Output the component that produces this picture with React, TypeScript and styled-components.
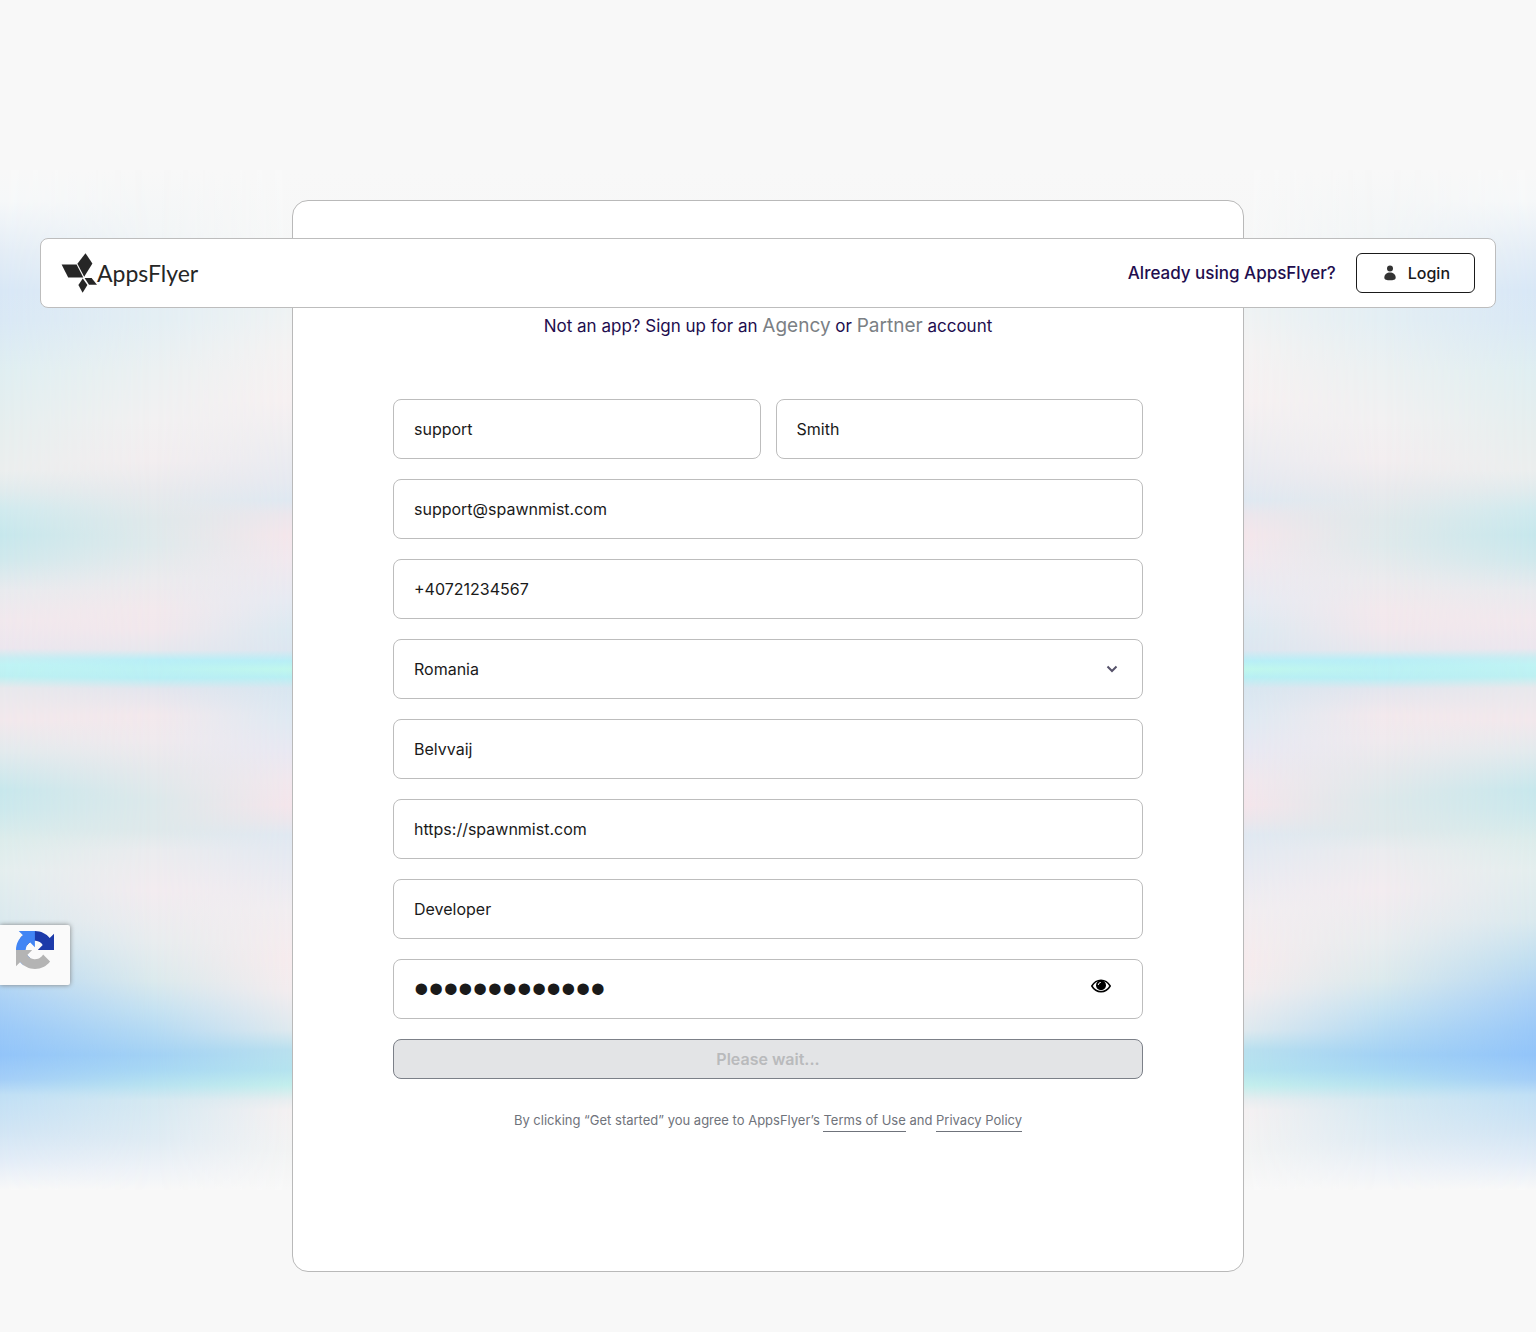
import React, { useState } from "react";
import styled, { createGlobalStyle, css } from "styled-components";

type Stop = [number, string];

const BANDS_TOP = 170;
const BANDS_HEIGHT = 1020;

const gradient = (stops: Stop[]) =>
  `linear-gradient(to bottom, ${stops.map(([y, c]) => `${c} ${y - BANDS_TOP}px`).join(", ")})`;

/* Colour bands of the iridescent backdrop, from the window edge inwards. */
const edgeBands: Stop[] = [
  [170, "#f8f8f8"], [200, "#f6f8f9"], [250, "#e4edf6"], [290, "#d8e7f6"], [320, "#d9e8f5"],
  [370, "#dfeef1"], [430, "#e6eeee"], [470, "#ebeeee"], [490, "#e0ebed"], [510, "#d0eaee"],
  [535, "#c6e7ec"], [560, "#d0e8ec"], [590, "#e8eaee"], [620, "#f1e8ed"], [648, "#ece6ee"],
  [658, "#c8edf2"], [665, "#bff3f4"], [676, "#bdf0f2"], [688, "#e8e8ec"], [720, "#f2e8ec"],
  [750, "#e3eaed"], [790, "#c7e7ec"], [810, "#cce8ec"], [840, "#dceceb"], [870, "#e4eeee"],
  [920, "#dae9ee"], [960, "#c0def0"], [1000, "#a9d0f6"], [1030, "#9ac8f8"], [1055, "#92c4f9"],
  [1080, "#a4cef7"], [1095, "#c0dff5"], [1130, "#d0e4f4"], [1160, "#e2ecf7"], [1190, "#f8f8f8"],
];

const middleBands: Stop[] = [
  [170, "#f8f8f8"], [230, "#f3f6f7"], [290, "#e4eef5"], [320, "#e4eff4"], [370, "#ecf1f2"],
  [420, "#f2f1f2"], [460, "#f3eef0"], [490, "#e9eaed"], [520, "#e0e9eb"], [545, "#e0eaec"],
  [580, "#ecebee"], [610, "#f3e9ed"], [630, "#f2e8ed"], [650, "#e8e8ee"], [660, "#b9eff7"],
  [669, "#bcf2f4"], [678, "#b9eff5"], [689, "#e4e6ee"], [715, "#f3e9ed"], [740, "#f0eaee"],
  [770, "#e6e9ec"], [800, "#dde9eb"], [830, "#dfe9eb"], [850, "#ebecef"], [890, "#f3ecf0"],
  [940, "#e9edef"], [980, "#dceaed"], [1010, "#c5e2f2"], [1055, "#a3d2f5"], [1070, "#a8d8f4"],
  [1085, "#b8e3f1"], [1100, "#d5e9f2"], [1140, "#e0ecf4"], [1170, "#eff3f8"], [1190, "#f8f8f8"],
];

const innerBands: Stop[] = [
  [170, "#f8f8f8"], [260, "#f6f7f7"], [310, "#eef2f3"], [350, "#f4f2f2"], [400, "#f6f0f1"],
  [440, "#eeedf0"], [480, "#e6e9f0"], [500, "#dfe8f1"], [515, "#ece6ec"], [535, "#f4e6eb"],
  [560, "#f1e8ee"], [600, "#e6eaf2"], [630, "#dce9f1"], [650, "#dce6f0"], [661, "#b8eef6"],
  [669, "#c0f7ec"], [677, "#b8eff3"], [688, "#d8e6f0"], [720, "#dfe9f2"], [750, "#e8e8f2"],
  [780, "#f1e7ed"], [805, "#f4e5eb"], [820, "#ece6ec"], [835, "#e0e8f1"], [870, "#e8eaf1"],
  [910, "#f1edf0"], [960, "#f6ebed"], [990, "#f3ecee"], [1030, "#dfe9ee"], [1050, "#b9e0ee"],
  [1070, "#b5e3ee"], [1085, "#c3eeec"], [1100, "#e8edef"], [1110, "#f4f0f1"], [1150, "#f2f3f3"],
  [1190, "#f8f8f8"],
];

const GlobalStyle = createGlobalStyle`
  *, *::before, *::after { box-sizing: border-box; }
  body {
    margin: 0;
    background: #f8f8f8;
    color: #1a1a1a;
    font-family: Inter, "Liberation Sans", sans-serif;
    font-size: 16px;
    line-height: 24px;
  }
`;

const Page = styled.div`
  position: relative;
  isolation: isolate;
  padding: 200px 40px 60px;
  background: ${gradient(middleBands)} 0 ${BANDS_TOP}px / 100% ${BANDS_HEIGHT}px no-repeat;

  &::before, &::after {
    content: "";
    position: absolute;
    top: ${BANDS_TOP}px;
    left: 0;
    right: 0;
    height: ${BANDS_HEIGHT}px;
    z-index: -1;
  }
  &::before {
    background: ${gradient(edgeBands)};
    mask-image: linear-gradient(to right, #000 0%, transparent 10%, transparent 90%, #000 100%);
  }
  &::after {
    background: ${gradient(innerBands)};
    mask-image: linear-gradient(to right, transparent 10%, #000 19%, #000 81%, transparent 90%);
  }
`;

const Header = styled.header`
  position: absolute;
  top: 238px;
  left: 40px;
  right: 40px;
  z-index: 2;
  display: flex;
  align-items: center;
  justify-content: space-between;
  padding: 14px 20px;
  background: #fff;
  border: 1px solid #bdbdbd;
  border-radius: 8px;
`;

const Brand = styled.a`
  display: flex;
  align-items: center;
  color: #262626;
  font-family: Lato, "Liberation Sans", sans-serif;
  font-size: 23px;
  line-height: 40px;
  text-decoration: none;

  svg { display: block; }
`;

const HeaderActions = styled.div`
  display: flex;
  align-items: center;
  gap: 20px;
`;

const HeaderNote = styled.span`
  color: #220d4e;
  font-size: 17px;
  font-weight: 500;
`;

const LoginButton = styled.button`
  display: flex;
  align-items: center;
  gap: 12px;
  height: 40px;
  padding: 0 24px 0 27px;
  border: 1px solid #1a1a1a;
  border-radius: 6px;
  background: #fff;
  color: #1a1a1a;
  font: 500 16px/24px Inter, "Liberation Sans", sans-serif;
`;

const Card = styled.main`
  max-width: 952px;
  margin: 0 auto;
  padding: 113px 100px 140px;
  background: #fff;
  border: 1px solid #b9b9b9;
  border-radius: 16px;
`;

const Lead = styled.p`
  margin: 0 0 61px;
  color: #220d4e;
  font-size: 17px;
  line-height: 24px;
  text-align: center;
`;

const LeadLink = styled.a`
  color: #7b8084;
  font-size: 19px;
  text-decoration: none;
`;

const Form = styled.form`
  display: grid;
  grid-template-columns: 1fr 1fr;
  gap: 20px 15px;
`;

const Field = styled.label<{ $half?: boolean }>`
  position: relative;
  display: block;
  grid-column: ${(p) => (p.$half ? "auto" : "1 / -1")};
`;

const control = css`
  display: block;
  width: 100%;
  height: 60px;
  padding: 0 20px;
  border: 1px solid #bdbdbd;
  border-radius: 8px;
  background: #fff;
  color: #1a1a1a;
  font: 400 16px/24px Inter, "Liberation Sans", sans-serif;
  outline: none;
`;

const Input = styled.input`
  ${control}

  /* Large, closely set bullets while the password is masked. */
  &[type="password"] {
    font: 42px/56px "Liberation Sans", sans-serif;
  }
`;

const Select = styled.select`
  ${control}
  appearance: none;
`;

const SelectArrow = styled.svg`
  position: absolute;
  top: 24px;
  right: 25px;
  pointer-events: none;
`;

const RevealButton = styled.button`
  position: absolute;
  top: 17px;
  right: 32px;
  display: flex;
  padding: 0;
  border: 0;
  background: none;
`;

const Submit = styled.button`
  grid-column: 1 / -1;
  height: 40px;
  border: 1px solid #7c8088;
  border-radius: 8px;
  background: #e3e4e6;
  color: #b9babc;
  font: 600 16px/24px Inter, "Liberation Sans", sans-serif;
`;

const Terms = styled.p`
  margin: 30px 0 0;
  color: #6f737b;
  font-size: 13px;
  line-height: 22px;
  text-align: center;
`;

const TermsLink = styled.a`
  padding-bottom: 3px;
  border-bottom: 1px solid #6f737b;
  color: inherit;
  text-decoration: none;
`;

const CaptchaBadge = styled.aside`
  position: absolute;
  top: 925px;
  left: 0;
  z-index: 2;
  width: 70px;
  height: 60px;
  padding: 6px 16px;
  border-radius: 0 2px 2px 0;
  background: #fafafa;
  box-shadow: 0 0 5px gray;
`;

const LogoMark = () => (
  <svg width="36" height="40" viewBox="0 0 36 40" fill="#262626" aria-hidden="true">
    <path d="M0.6 11.4H15.6L22.3 24.6H7.2Z" />
    <path d="M24.5 0.2L31.4 10.5L23.2 23.8L16.4 10.8Z" />
    <path d="M23.6 25H30.6L36 31.8H28Z" />
    <path d="M21.8 25.4L26.4 32L21.6 39.7L17.4 32Z" />
  </svg>
);

const PersonIcon = () => (
  <svg width="12" height="16" viewBox="0 0 12 16" fill="#333" aria-hidden="true">
    <circle cx="6" cy="3.6" r="3" />
    <path d="M0.3 12.4C0.5 9.4 3 7.6 6 7.6S11.5 9.4 11.7 12.4C11.8 14.6 9 15.3 6 15.3S0.2 14.6 0.3 12.4Z" />
  </svg>
);

const EyeIcon = () => (
  <svg width="20" height="20" viewBox="0 0 20 20" aria-hidden="true">
    <path d="M0.8 10C3 6.3 6.2 4.2 10 4.2S17 6.3 19.2 10C17 13.7 13.8 15.8 10 15.8S3 13.7 0.8 10Z" fill="none" stroke="#000" strokeWidth="1.5" />
    <circle cx="10" cy="9.2" r="5" fill="#000" />
    <path d="M7.2 9A2.9 2.9 0 0 1 9.8 6.4" fill="none" stroke="#fff" strokeWidth="1" />
  </svg>
);

const CaptchaIcon = () => (
  <svg width="38" height="38" viewBox="0 0 64 64" aria-hidden="true">
    <path d="M64 31.955l-.033-1.37V4.687l-7.16 7.16C50.948 4.674 42.033.093 32.05.093c-10.4 0-19.622 4.96-25.458 12.64l11.736 11.86a15.55 15.55 0 0 1 4.754-5.334c2.05-1.6 4.952-2.906 8.968-2.906.485 0 .86.057 1.135.163 4.976.393 9.288 3.14 11.828 7.124l-8.307 8.307L64 31.953" fill="#1c3aa9" />
    <path d="M31.862.094l-1.37.033H4.594l7.16 7.16C4.58 13.147 0 22.06 0 32.046c0 10.4 4.96 19.622 12.64 25.458L24.5 45.768a15.55 15.55 0 0 1-5.334-4.754c-1.6-2.05-2.906-4.952-2.906-8.968 0-.485.057-.86.163-1.135.393-4.976 3.14-9.288 7.124-11.828l8.307 8.307L31.86.095" fill="#4285f4" />
    <path d="M.001 32.045l.033 1.37v25.898l7.16-7.16c5.86 7.173 14.774 11.754 24.76 11.754 10.4 0 19.622-4.96 25.458-12.64l-11.736-11.86a15.55 15.55 0 0 1-4.754 5.334c-2.05 1.6-4.952 2.906-8.968 2.906-.485 0-.86-.057-1.135-.163-4.976-.393-9.288-3.14-11.828-7.124l8.307-8.307c-10.522.04-22.4.066-27.295-.005" fill="#b4b4b4" />
  </svg>
);

export default function App() {
  const [visible, setVisible] = useState(false);

  return (
    <>
      <GlobalStyle />
      <Page>
        <Header>
          <Brand href="#">
            <LogoMark />
            AppsFlyer
          </Brand>
          <HeaderActions>
            <HeaderNote>Already using AppsFlyer?</HeaderNote>
            <LoginButton type="button">
              <PersonIcon />
              Login
            </LoginButton>
          </HeaderActions>
        </Header>

        <Card>
          <Lead>
            Not an app? Sign up for an <LeadLink href="#">Agency</LeadLink> or{" "}
            <LeadLink href="#">Partner</LeadLink> account
          </Lead>
          <Form onSubmit={(e) => e.preventDefault()}>
            <Field $half>
              <Input aria-label="First name" defaultValue="support" />
            </Field>
            <Field $half>
              <Input aria-label="Last name" defaultValue="Smith" />
            </Field>
            <Field>
              <Input type="email" aria-label="Email" defaultValue="support@spawnmist.com" />
            </Field>
            <Field>
              <Input type="tel" aria-label="Phone" defaultValue="+40721234567" />
            </Field>
            <Field>
              <Select aria-label="Country" defaultValue="Romania">
                <option>Romania</option>
              </Select>
              <SelectArrow width="12" height="12" viewBox="0 0 12 12" fill="none" stroke="#56526a" strokeWidth="2" aria-hidden="true">
                <path d="M1.5 3.5L6 8L10.5 3.5" />
              </SelectArrow>
            </Field>
            <Field>
              <Input aria-label="Company" defaultValue="Belvvaij" />
            </Field>
            <Field>
              <Input type="url" aria-label="Website" defaultValue="https://spawnmist.com" />
            </Field>
            <Field>
              <Input aria-label="Role" defaultValue="Developer" />
            </Field>
            <Field as="div">
              <Input type={visible ? "text" : "password"} aria-label="Password" defaultValue="Password12345" />
              <RevealButton type="button" aria-label="Show password" onClick={() => setVisible(!visible)}>
                <EyeIcon />
              </RevealButton>
            </Field>
            <Submit type="submit" disabled>Please wait...</Submit>
          </Form>
          <Terms>
            By clicking “Get started” you agree to AppsFlyer’s <TermsLink href="#">Terms of Use</TermsLink> and{" "}
            <TermsLink href="#">Privacy Policy</TermsLink>
          </Terms>
        </Card>

        <CaptchaBadge aria-label="reCAPTCHA">
          <CaptchaIcon />
        </CaptchaBadge>
      </Page>
    </>
  );
}
